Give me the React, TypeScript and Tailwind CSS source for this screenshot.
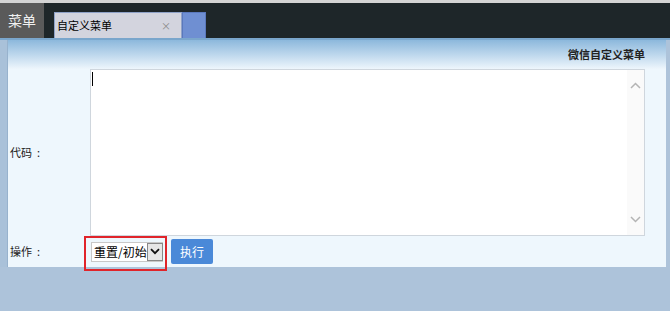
import React from "react";

const font = { fontFamily: '"Noto Sans CJK SC", "Noto Sans", sans-serif' };

export default function App() {
  return (
    <div className="w-[670px] h-[311px] bg-[#adc3da] flex flex-col overflow-hidden" style={font}>
      {/* top bar */}
      <div className="h-[38px] bg-[#1e2629] border-t-[3px] border-[#d4d4d4] flex items-stretch shrink-0">
        <div className="w-[44px] bg-[#5a5a5a] text-[#f0f0f0] text-[14px] flex items-center justify-center">菜单</div>
        <div className="ml-[10px] mt-[9px] flex">
          <div className="w-[128px] bg-[#d3d4de] border border-[#8fa2c8] border-b-0 flex items-center justify-between pl-[2px] pr-[10px]">
            <span className="text-[11px] text-black">自定义菜单</span>
            <span className="text-[10px] text-[#8a8a8a]">×</span>
          </div>
          <div className="w-[24px] bg-[#6f8fd2] border border-[#5a78bd] border-b-0" />
        </div>
      </div>
      <div className="h-[2px] bg-[#7aa6cc] shrink-0" />
      {/* main row */}
      <div className="flex shrink-0">
        <div className="w-[8px] bg-[#a9c1d9] border-r border-[#97b2cd]" />
        <div className="flex-1 mr-[4px] bg-[#eef7fd] flex flex-col">
          <div className="h-[29px] bg-gradient-to-b from-[#8cb8dc] to-[#eef6fc] flex items-center justify-end pr-[21px]">
            <span className="text-[11px] font-bold text-[#222]">微信自定义菜单</span>
          </div>
          <div className="flex h-[167px]">
            <div className="w-[82px] flex items-center pl-[2px] text-[11px] text-[#222]">
              代码<span className="ml-[5px]">:</span>
            </div>
            <div className="w-[555px] border border-[#cfd6dd] bg-white relative flex">
              <div className="flex-1 pl-[1px] pt-[2px]">
                <div className="w-[1px] h-[14px] bg-black" />
              </div>
              <div className="w-[17px] flex flex-col items-center justify-between py-[12px] bg-[#fafafa]">
                <svg width="11" height="7" viewBox="0 0 11 7">
                  <path d="M1 6 L5.5 1.5 L10 6" stroke="#b4b4b4" strokeWidth="1.5" fill="none" />
                </svg>
                <svg width="11" height="7" viewBox="0 0 11 7">
                  <path d="M1 1 L5.5 5.5 L10 1" stroke="#b4b4b4" strokeWidth="1.5" fill="none" />
                </svg>
              </div>
            </div>
          </div>
          <div className="flex h-[31px] items-center">
            <div className="w-[83px] pl-[2px] text-[11px] text-[#222]">
              操作<span className="ml-[5px]">:</span>
            </div>
            <div className="relative flex items-center">
              <div className="absolute left-[-7px] top-[-3px] w-[83px] h-[35px] border-2 border-[#e0242a]" />
              <div className="w-[72px] h-[20px] bg-white border border-[#c8c8c8] flex items-center">
                <span className="flex-1 text-[12px] text-black pl-[2px] leading-none whitespace-nowrap">重置/初始</span>
                <div className="w-[16px] h-[18px] bg-[#e6e6e6] border border-[#888] flex items-center justify-center shrink-0">
                  <svg width="10" height="7" viewBox="0 0 10 7">
                    <path d="M1 1.2 L5 5.2 L9 1.2" stroke="#111" strokeWidth="1.8" fill="none" />
                  </svg>
                </div>
              </div>
              <div className="ml-[8px] w-[42px] h-[25px] bg-[#4a89d8] rounded-[2px] flex items-center justify-center text-white text-[12px]">执行</div>
            </div>
          </div>
        </div>
      </div>
    </div>
  );
}
